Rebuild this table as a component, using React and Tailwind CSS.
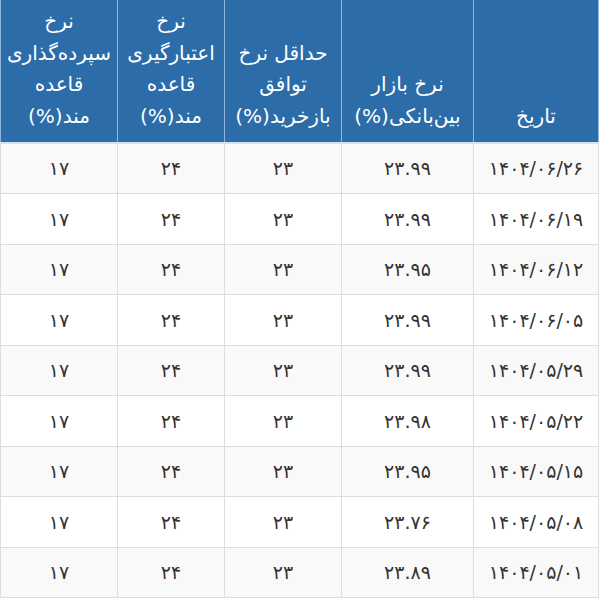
import React from "react";

const rows = [
  ["۱۴۰۴/۰۶/۲۶", "۲۳.۹۹"],
  ["۱۴۰۴/۰۶/۱۹", "۲۳.۹۹"],
  ["۱۴۰۴/۰۶/۱۲", "۲۳.۹۵"],
  ["۱۴۰۴/۰۶/۰۵", "۲۳.۹۹"],
  ["۱۴۰۴/۰۵/۲۹", "۲۳.۹۹"],
  ["۱۴۰۴/۰۵/۲۲", "۲۳.۹۸"],
  ["۱۴۰۴/۰۵/۱۵", "۲۳.۹۵"],
  ["۱۴۰۴/۰۵/۰۸", "۲۳.۷۶"],
  ["۱۴۰۴/۰۵/۰۱", "۲۳.۸۹"],
];

const th = "align-bottom font-normal pb-[10px] border-x border-[#8fb6de] border-b-2 border-b-[#d3e2ef]";
const td = "text-center border border-[#dddddd]";

export default function App() {
  return (
    <div className="w-[600px] h-[600px] overflow-hidden bg-white" dir="rtl" style={{ fontFamily: '"DejaVu Sans", "Noto Sans", sans-serif' }}>
      <table className="table-fixed border-collapse w-[598px] mr-auto">
        <colgroup>
          <col className="w-[125px]" />
          <col className="w-[132px]" />
          <col className="w-[117px]" />
          <col className="w-[107px]" />
          <col className="w-[117px]" />
        </colgroup>
        <thead>
          <tr className="h-[143px] bg-[#2b6ca9] text-white text-[20px] leading-[31.5px]">
            <th className={th}>تاریخ</th>
            <th className={th}>نرخ بازار<br />بین‌بانکی(%)</th>
            <th className={th}>حداقل نرخ<br />توافق<br />بازخرید(%)</th>
            <th className={th}>نرخ<br />اعتبارگیری<br />قاعده<br />مند(%)</th>
            <th className={th}>نرخ<br />سپرده‌گذاری<br />قاعده<br />مند(%)</th>
          </tr>
        </thead>
        <tbody className="text-[19px] text-[#333333]">
          {rows.map((r, i) => (
            <tr key={i} className={i % 2 === 0 ? "h-[50.5px] bg-[#f9f9f9]" : "h-[50.5px] bg-white"}>
              <td className={td}>{r[0]}</td>
              <td className={td}>{r[1]}</td>
              <td className={td}>۲۳</td>
              <td className={td}>۲۴</td>
              <td className={td}>۱۷</td>
            </tr>
          ))}
        </tbody>
      </table>
    </div>
  );
}
